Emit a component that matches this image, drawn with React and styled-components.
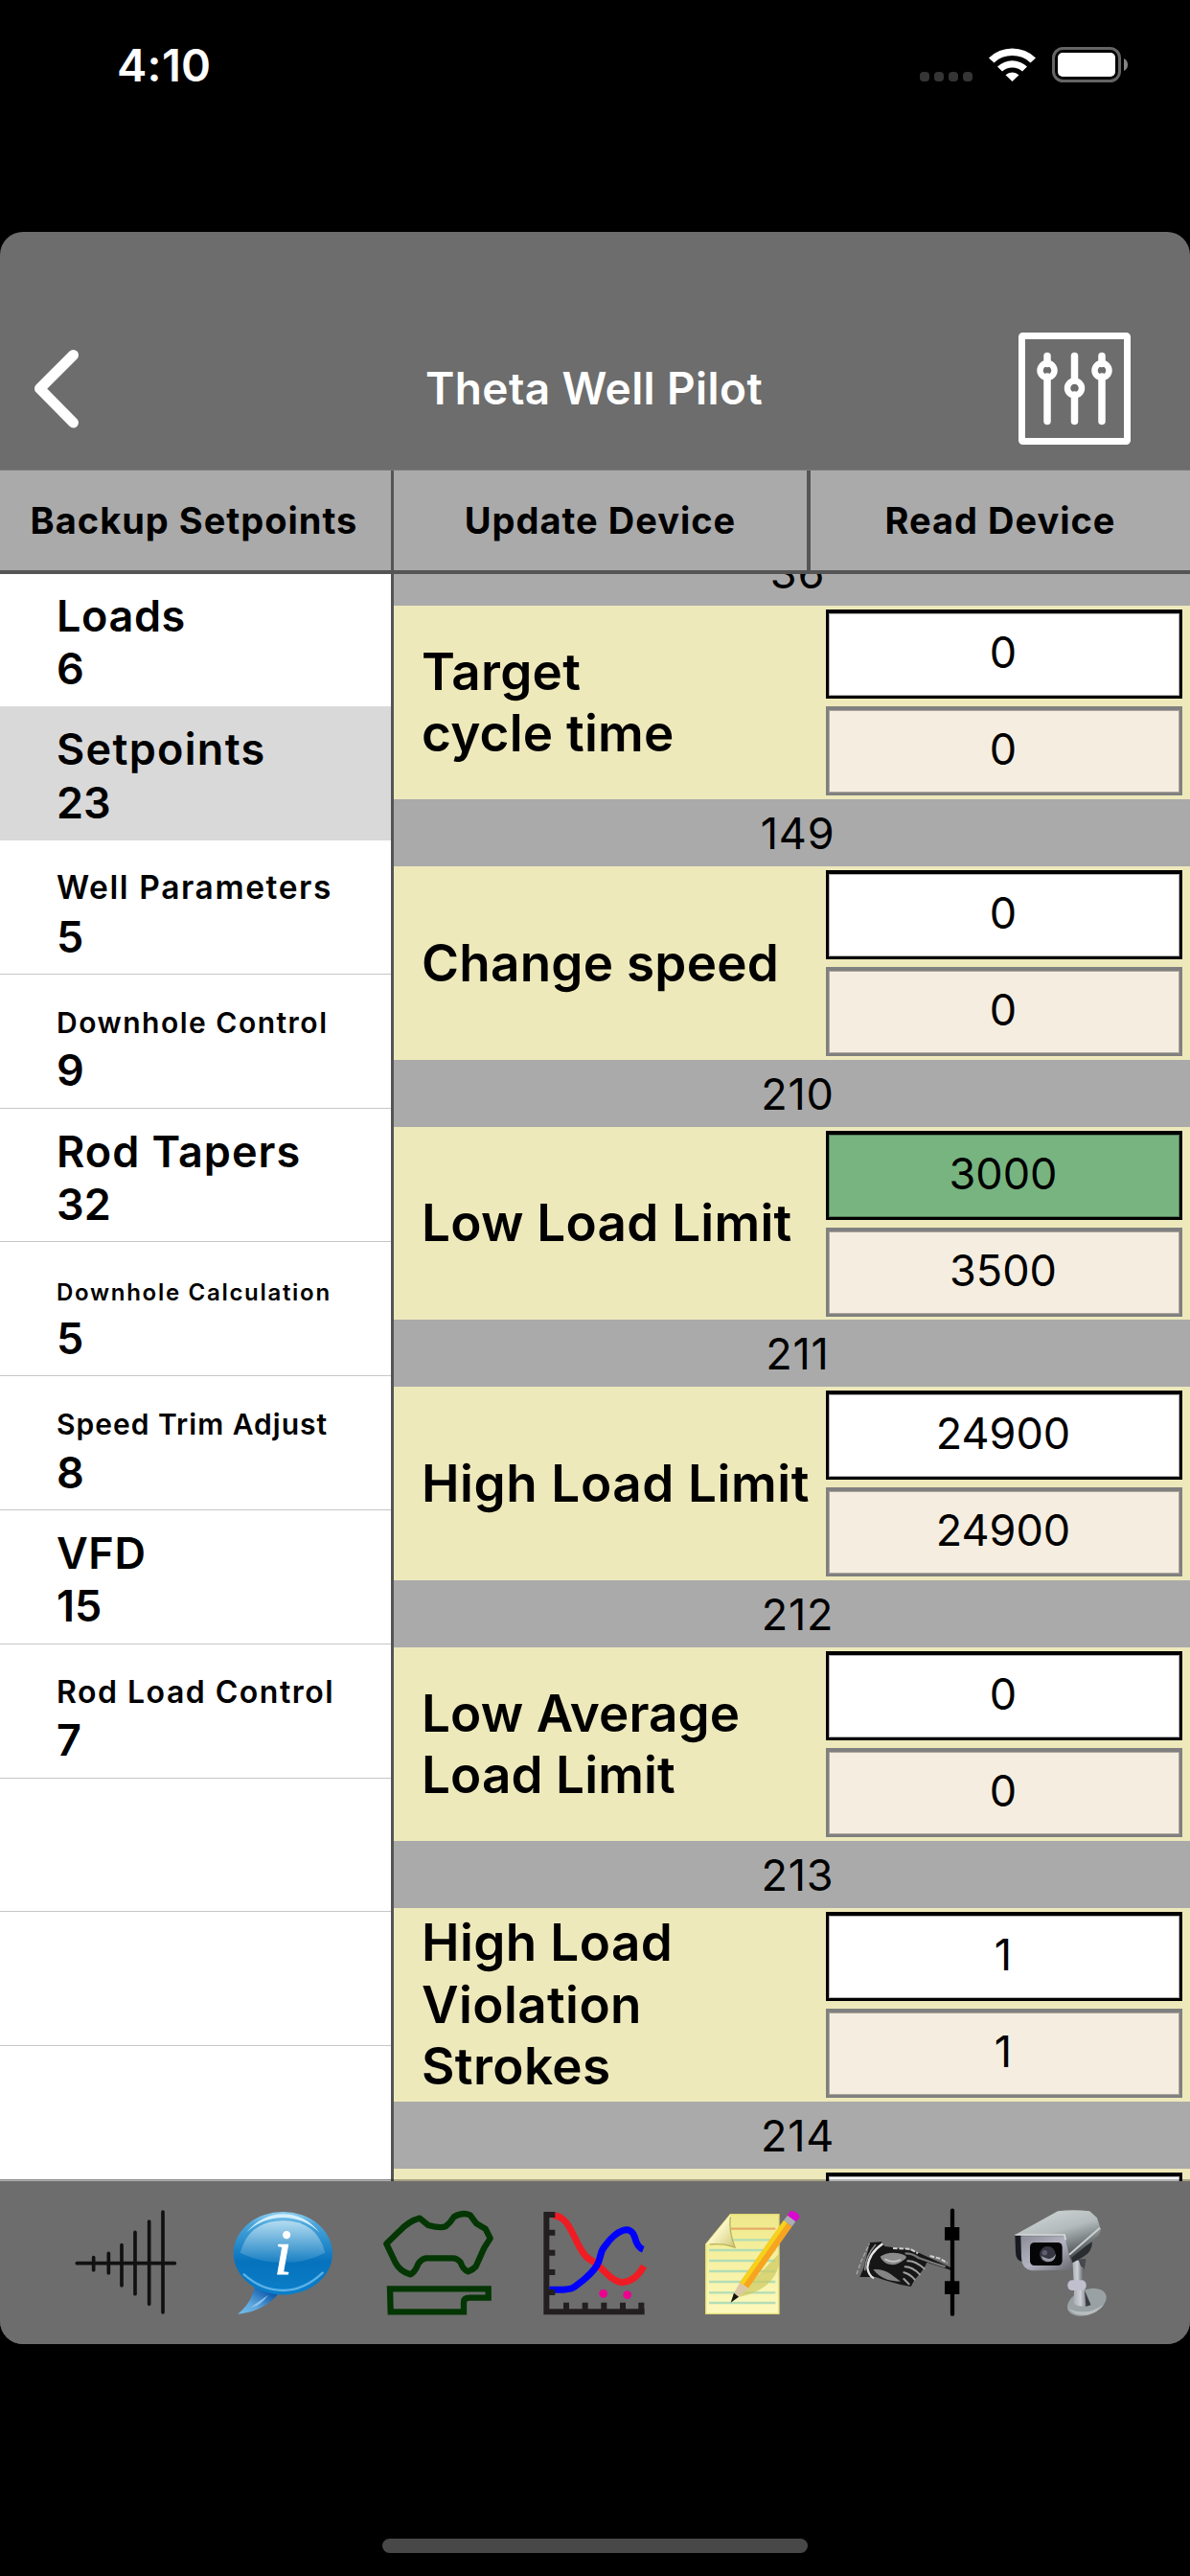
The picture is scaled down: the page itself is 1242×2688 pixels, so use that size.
import styled, { createGlobalStyle } from "styled-components"

const GlobalStyle = createGlobalStyle`
    body{
        margin: 0;
        background: #000;
        color: #000;
        font-family: Inter, "Liberation Sans", sans-serif;
    }
`

const Screen = styled.div`
    width: 1242px;
    height: 2688px;
    display: flex;
    flex-direction: column;
    background: #000;
    overflow: hidden;
`

const StatusBar = styled.div`
    height: 242px;
    flex-shrink: 0;
    display: flex;
    justify-content: space-between;
    align-items: flex-start;
    box-sizing: border-box;
    padding: 39px 65px 0 122px;
`

const Clock = styled.span`
    color: #fff;
    font-size: 47px;
    font-weight: 600;
    line-height: 58px;
    letter-spacing: 0.3px;
`

const StatusIcons = styled.svg`
    width: 217px;
    height: 38px;
    margin-top: 10px;
`

const Panel = styled.div`
    height: 2204px;
    flex-shrink: 0;
    display: flex;
    flex-direction: column;
    border-radius: 24px;
    overflow: hidden;
    background: #6d6d6d;
`

const Header = styled.div`
    height: 248px;
    flex-shrink: 0;
    box-sizing: border-box;
    padding: 78px 62px 0 28px;
    display: grid;
    grid-template-columns: 117px 1fr 117px;
    align-items: center;
`

const Title = styled.h1`
    margin: 0;
    padding-left: 32px;
    text-align: center;
    color: #fff;
    font-size: 46px;
    font-weight: 600;
    letter-spacing: 0.4px;
`

const HeaderIcon = styled.svg`
    width: ${({ w }) => w}px;
    height: 117px;
`

const Actions = styled.div`
    height: 109px;
    flex-shrink: 0;
    box-sizing: border-box;
    display: grid;
    grid-template-columns: 411px 435px 1fr;
    background: #aaa;
    border-top: 1px solid #7c7c7c;
    border-bottom: 4px solid #555;
`

const Action = styled.button`
    border: 0;
    padding: 0 ${({ $inset }) => $inset || 0}px 0 0;
    background: none;
    color: #000;
    font-family: inherit;
    font-size: 38px;
    font-weight: 700;
    letter-spacing: 1px;
    white-space: nowrap;
    border-right: ${({ $line }) => $line || 0}px solid #555;
`

const Body = styled.div`
    height: 1677px;
    flex-shrink: 0;
    display: flex;
    overflow: hidden;
`

const Groups = styled.div`
    width: 408px;
    flex-shrink: 0;
    box-sizing: content-box;
    border-right: 3px solid #555;
    background: #fff;
    overflow: hidden;
`

const GroupRow = styled.div`
    height: 139.77px;
    box-sizing: border-box;
    padding: 17px 0 0 59px;
    background: ${({ $active }) => ($active ? "#d9d9d9" : "#fff")};
    border-bottom: 1px solid ${({ $active, $plain }) => ($active ? "#d9d9d9" : $plain ? "#fff" : "#c6c6c8")};
    &:first-child{
        margin-top: -1.4px;
    }
`

const GroupLine = styled.div`
    font-size: 45px;
    font-weight: 600;
    line-height: 55.5px;
    white-space: nowrap;
`

const GroupName = styled.span`
    font-size: ${({ $size }) => $size}px;
    line-height: 0;
    letter-spacing: ${({ $space }) => $space}px;
`

const Setpoints = styled.div`
    flex: 1;
    overflow: hidden;
    background: #eee9bb;
`

const Scrolled = styled.div`
    margin-top: -37px;
`

const SectionTitle = styled.div`
    height: 70px;
    box-sizing: border-box;
    padding-left: 12px;
    background: #aaa;
    font-size: 45px;
    line-height: 71px;
    letter-spacing: 0.8px;
    text-align: center;
`

const SetpointRow = styled.div`
    height: 201.83px;
    box-sizing: border-box;
    padding: 4px 8px 0 29px;
    display: flex;
    justify-content: space-between;
`

const SetpointName = styled.div`
    height: 194px;
    display: flex;
    align-items: center;
    font-size: 53px;
    font-weight: 600;
    line-height: 64.5px;
    letter-spacing: ${({ $space }) => $space}px;
    white-space: pre;
`

const Values = styled.div`
    width: 372px;
    flex-shrink: 0;
    display: flex;
    flex-direction: column;
    gap: 8px;
`

const Value = styled.div`
    height: 93px;
    box-sizing: border-box;
    border-style: solid;
    border-width: 4px 3px 3px;
    border-color: ${({ $stored }) => ($stored ? "#808080" : "#000")};
    background: ${({ $stored, $changed }) => ($stored ? "#f5eee0" : $changed ? "#77b480" : "#fff")};
    box-shadow: inset 0 0 0 1px rgba(0, 0, 0, 0.3);
    font-size: 45px;
    line-height: 81px;
    text-align: center;
    padding-right: 2px;
`

const TabBar = styled.div`
    height: 170px;
    flex-shrink: 0;
    box-sizing: border-box;
    padding-left: 49px;
    display: flex;
    position: relative;
    background: #6d6d6d;
    box-shadow: 0 -2px 0 rgba(0, 0, 0, 0.3);
`

const TabIcon = styled.svg`
    width: 163px;
    height: 170px;
`

const HomeIndicator = styled.div`
    width: 444px;
    height: 15px;
    margin: 203px auto 0;
    border-radius: 8px;
    background: #484848;
`

const groups = [
    { name: "Loads", count: 6, size: 45, space: 0.6, plain: true },
    { name: "Setpoints", count: 23, size: 45, space: 1.3, active: true },
    { name: "Well Parameters", count: 5, size: 33.5, space: 1.6 },
    { name: "Downhole Control", count: 9, size: 30, space: 1.5 },
    { name: "Rod Tapers", count: 32, size: 45, space: 1 },
    { name: "Downhole Calculation", count: 5, size: 24, space: 1.7 },
    { name: "Speed Trim Adjust", count: 8, size: 30, space: 1 },
    { name: "VFD", count: 15, size: 45, space: 0.6 },
    { name: "Rod Load Control", count: 7, size: 32, space: 1.5 },
    {},
    {},
    {},
]

const setpoints = [
    { id: 36, name: "Target\ncycle time", value: 0, stored: 0 },
    { id: 149, name: "Change speed", value: 0, stored: 0 },
    { id: 210, name: "Low Load Limit", value: 3000, stored: 3500 },
    { id: 211, name: "High Load Limit", value: 24900, stored: 24900, space: 0.6 },
    { id: 212, name: "Low Average\nLoad Limit", value: 0, stored: 0, space: 0.1 },
    { id: 213, name: "High Load\nViolation\nStrokes", value: 1, stored: 1, space: 0.4 },
    { id: 214, name: "", value: "", stored: "" },
]

const SignalBatteryIcon = () => (
    <StatusIcons viewBox="0 0 217 38">
        <g fill="#353535">
            {[0, 15, 30, 45].map((x) => (
                <rect key={x} x={x} y="26" width="10" height="10" rx="4" />
            ))}
        </g>
        <g transform="translate(72 0)" fill="#fff">
            <path d="M0 11.500A35 35 0 0 1 49 11.500L43.500 16.500A27.500 27.500 0 0 0 5.500 16.500z" />
            <path d="M9 20.500A22.500 22.500 0 0 1 40 20.500L35 25.500A15.500 15.500 0 0 0 14 25.500z" />
            <path d="M17.500 29.200A10.500 10.500 0 0 1 31.500 29.200L24.500 36z" />
        </g>
        <rect x="139.500" y="1.500" width="69" height="34" rx="10" fill="none" stroke="#656565" strokeWidth="3" />
        <rect x="144" y="6" width="60" height="25" rx="5" fill="#fff" />
        <path d="M213 12q4 2 4 6.500t-4 6.500z" fill="#858585" />
    </StatusIcons>
)

const BackIcon = () => (
    <HeaderIcon w={60} viewBox="0 0 60 117">
        <path d="M48.500 23.500L13.500 58.500l35 35.500" fill="none" stroke="#fff" strokeWidth="11" strokeLinecap="round" strokeLinejoin="round" />
    </HeaderIcon>
)

const SlidersIcon = () => (
    <HeaderIcon w={117} viewBox="0 0 117 117">
        <g fill="none" stroke="#fff">
            <rect x="3.500" y="3.500" width="110" height="110" rx="1" strokeWidth="7" />
            <g strokeWidth="7.500" strokeLinecap="round">
                <path d="M30 24.500v8M30 46v46.500M58.500 24.500v25M58.500 65v27.500M87 24.500v8M87 46v46.500" />
            </g>
            <g strokeWidth="6.500">
                <circle cx="30" cy="39.500" r="7.500" />
                <circle cx="58.500" cy="58" r="7.500" />
                <circle cx="87" cy="39.500" r="7.500" />
            </g>
        </g>
    </HeaderIcon>
)

const SignalIcon = () => (
    <TabIcon viewBox="-33 -12 489 510">
        <path
            d="M61 245H367M113 227v39M160 214v62M201 188v127M243 148v193M287 114v259M330 84v315"
            fill="none" stroke="#111" strokeWidth="11" strokeLinecap="round"
        />
    </TabIcon>
)

const InfoIcon = () => (
    <TabIcon viewBox="456 -12 489 510">
        <defs>
            <linearGradient id="bubble" x1="0" y1="0" x2="0" y2="1">
                <stop offset="0" stopColor="#8fd0f2" />
                <stop offset="0.15" stopColor="#4aa5da" />
                <stop offset="0.6" stopColor="#0672bd" />
                <stop offset="1" stopColor="#0c7fca" />
            </linearGradient>
            <linearGradient id="gloss" x1="0" y1="0" x2="0" y2="1">
                <stop offset="0" stopColor="#b3dcf1" />
                <stop offset="1" stopColor="#1a80c3" />
            </linearGradient>
            <linearGradient id="tail" x1="0" y1="1" x2="1" y2="0">
                <stop offset="0" stopColor="#6fc0ee" />
                <stop offset="0.35" stopColor="#5fa6de" />
                <stop offset="0.8" stopColor="#0c5bac" />
            </linearGradient>
        </defs>
        <path d="M618 318Q606 372 564 404Q645 396 690 342z" fill="url(#tail)" />
        <path d="M660 345Q626 366 606 384Q636 378 660 345z" fill="#9ccdf0" opacity="0.8" />
        <ellipse cx="706" cy="214" rx="155" ry="130" fill="url(#bubble)" />
        <path d="M592 148Q640 92 706 91T820 148Q770 102 706 102T592 148z" fill="#d3effc" />
        <path d="M572 212Q600 112 706 112T838 212Q780 243 706 243T572 212z" fill="url(#gloss)" />
        <path d="M584 280Q640 330 706 330T830 275" fill="none" stroke="#5bb2e8" strokeWidth="7" strokeLinecap="round" />
        <text x="678" y="280" fill="#fff" stroke="#fff" strokeWidth="3" fontFamily="'Liberation Serif', serif" fontStyle="italic" fontSize="202">i</text>
    </TabIcon>
)

const DynoCardIcon = () => (
    <TabIcon viewBox="-15 -12 489 510">
        <g fill="none" stroke="#033603" strokeWidth="19" strokeLinejoin="round">
            <path d="M70 184L110 145Q140 113 174 104L201 126Q238 136 255 130Q270 118 281 100Q308 84 332 94L352 121L380 137L395 167L376 197L350 255Q340 266 326 271Q310 265 302 242Q292 229 277 229H194Q180 231 170 246Q158 276 144 280Q112 270 98 243z" />
            <path d="M81 325H389V353H330Q312 353 312 367V397H83z" strokeLinejoin="miter" />
        </g>
    </TabIcon>
)

const ChartIcon = () => (
    <TabIcon viewBox="474 -12 489 510">
        <path d="M590 96C650 92 660 200 702 230C750 256 770 302 808 305Q850 302 876 254" fill="none" stroke="#ef1c24" strokeWidth="21" />
        <path d="M580 328H610C665 328 660 315 686 298C760 235 725 225 755 190C790 142 835 120 848 165Q855 195 874 202" fill="none" stroke="#0000fe" strokeWidth="21" />
        <circle cx="749" cy="340" r="13" fill="#ec0090" />
        <circle cx="824" cy="344" r="13" fill="#ec0090" />
        <g stroke="#231f20" fill="none" strokeWidth="18">
            <path d="M571 84V397H878" />
            <path d="M578 93h20M578 149h20M578 212h20M578 273h20M578 336h20M633 368v22M692 368v22M751 368v22M810 368v22M868 368v22" />
        </g>
    </TabIcon>
)

const NotesIcon = () => (
    <TabIcon viewBox="-27 -12 489 510">
        <defs>
            <linearGradient id="paper" x1="0" y1="0" x2="0" y2="1">
                <stop offset="0" stopColor="#efe98a" />
                <stop offset="1" stopColor="#fdf9bd" />
            </linearGradient>
            <linearGradient id="fold" x1="0" y1="0" x2="1" y2="1">
                <stop offset="0.4" stopColor="#fffbd0" />
                <stop offset="1" stopColor="#cfc97a" />
            </linearGradient>
        </defs>
        <path d="M157 92H309V403H80V186z" fill="url(#paper)" stroke="#e0dc72" strokeWidth="4" />
        <path d="M158 137H298" stroke="#e5ad69" strokeWidth="7" />
        <path d="M160 172H298M90 204H298M90 237H298M90 270H298M90 303H298M90 337H298M90 369H298" stroke="#b2ddb6" strokeWidth="7" />
        <path d="M309 215L202 325L180 352Q290 330 309 250z" fill="#cdc95f" opacity="0.7" />
        <path d="M157 92Q150 145 171 195Q128 178 80 186z" fill="url(#fold)" />
        <path d="M157 100Q151 145 171 195Q135 182 92 186" fill="none" stroke="#bab258" strokeWidth="4" />
        <path d="M186 306L324 110L350 130L213 323z" fill="#f7a520" />
        <path d="M186 306L324 110L335 118L198 313z" fill="#f6d21c" />
        <path d="M324 110L336 95L362 113L350 130z" fill="#a9adb5" />
        <path d="M336 95L344 82Q352 78 364 87T373 102L362 115z" fill="#dc08cf" />
        <path d="M186 306L213 323L180 352L166 342z" fill="#ddc8a6" />
        <path d="M168 338L183 350L158 368z" fill="#16130e" />
    </TabIcon>
)

const PointerIcon = () => (
    <TabIcon viewBox="462 -12 489 510">
        <path d="M594 180L630 178L640 192L702 200L750 214L846 258V266L772 242L766 256L750 278L734 296L722 318L690 312L640 298L612 288L562 288L574 260z" fill="#161616" />
        <path d="M552 280L566 240L592 184" fill="none" stroke="#a8a8a8" strokeWidth="4" strokeDasharray="14 6" />
        <path d="M634 184Q590 214 586 258Q588 282 606 292" fill="none" stroke="#e6e6e6" strokeWidth="7" />
        <path d="M612 186Q580 222 578 268" fill="none" stroke="#8a8a8a" strokeWidth="5" />
        <path d="M626 224Q652 206 690 215Q716 222 704 232Q682 250 664 250Q634 246 626 224z" fill="#8a8a8a" />
        <path d="M640 232Q664 246 690 234" fill="none" stroke="#c4c4c4" strokeWidth="5" />
        <path d="M604 264Q636 262 658 278L690 302Q632 302 604 264z" fill="#848484" />
        <path d="M666 198L720 200L744 214M782 222L812 230L836 244" fill="none" stroke="#d0d0d0" strokeWidth="6" strokeDasharray="14 5" />
        <path d="M704 214Q728 214 746 228Q790 244 830 256" fill="none" stroke="#777" strokeWidth="7" />
        <path d="M712 238Q734 236 764 262M704 256Q726 256 750 280M700 274Q718 278 734 296M700 294L716 310" fill="none" stroke="#a0a0a0" strokeWidth="6" strokeLinecap="round" />
        <path d="M852 80V404" stroke="#000" strokeWidth="13" strokeLinecap="round" />
        <path d="M828 132h46v41h-46zM828 301h46v41h-46z" fill="#000" />
    </TabIcon>
)

const CameraIcon = () => (
    <TabIcon viewBox="-9 -12 489 510">
        <defs>
            <linearGradient id="shell" x1="0.2" y1="0" x2="0.700" y2="1">
                <stop offset="0" stopColor="#d0d6d6" />
                <stop offset="0.45" stopColor="#b4bbbc" />
                <stop offset="1" stopColor="#3f4548" />
            </linearGradient>
            <linearGradient id="face" x1="0" y1="0" x2="1" y2="1">
                <stop offset="0" stopColor="#8b8c96" />
                <stop offset="0.5" stopColor="#b4b3c2" />
                <stop offset="1" stopColor="#66666e" />
            </linearGradient>
            <linearGradient id="stand" x1="0" y1="0" x2="1" y2="0">
                <stop offset="0" stopColor="#a9adb4" />
                <stop offset="0.4" stopColor="#cdd0d6" />
                <stop offset="1" stopColor="#4b4e52" />
            </linearGradient>
        </defs>
        <ellipse cx="313" cy="367" rx="64" ry="39" transform="rotate(-22 313 367)" fill="#9aa1a4" />
        <path d="M254 384Q270 411 313 407Q350 398 366 374Q330 398 300 397Q270 398 254 384z" fill="#b8bdc0" />
        <path d="M273 326H305L325 374Q300 388 272 372z" fill="url(#stand)" />
        <path d="M306 330L325 376L310 380z" fill="#393c40" />
        <path d="M268 236H306V250L298 305H272z" fill="url(#stand)" />
        <path d="M286 232L310 232L306 262L294 254z" fill="#46484d" />
        <rect x="253" y="298" width="58" height="32" rx="14" fill="#c0bfce" />
        <path d="M262 220L330 178Q330 210 300 226L268 244z" fill="#292d30" />
        <path d="M88 156L222 82Q270 76 322 82L345 103L357 140L350 158L260 232L246 166L240 158z" fill="url(#shell)" />
        <path d="M258 218L354 134" stroke="#cbd0cf" strokeWidth="6" />
        <path d="M88 154L110 158V240Q90 235 90 210z" fill="#171a20" />
        <path d="M106 160H244Q254 205 269 266L140 268Q108 262 108 226z" fill="url(#face)" />
        <path d="M88 156H243L247 172" fill="none" stroke="#d8dcdc" strokeWidth="5" />
        <rect x="135" y="180" width="101" height="72" rx="14" fill="#050507" />
        <circle cx="190" cy="217" r="25" fill="#343641" />
        <path d="M170 222Q174 240 194 240T216 216Q204 234 190 230T170 222z" fill="#999aa6" />
        <circle cx="181" cy="212" r="8" fill="#5d6072" />
    </TabIcon>
)

const App = () => {
    return (
        <Screen>
            <GlobalStyle />
            <StatusBar>
                <Clock>4:10</Clock>
                <SignalBatteryIcon />
            </StatusBar>
            <Panel>
                <Header>
                    <BackIcon />
                    <Title>Theta Well Pilot</Title>
                    <SlidersIcon />
                </Header>
                <Actions>
                    <Action $line={3} $inset={3}>Backup Setpoints</Action>
                    <Action $line={4}>Update Device</Action>
                    <Action>Read Device</Action>
                </Actions>
                <Body>
                    <Groups>
                        {groups.map((group, index) => (
                            <GroupRow key={index} $active={group.active} $plain={group.plain}>
                                {group.name && (
                                    <>
                                        <GroupLine>
                                            <GroupName $size={group.size} $space={group.space}>{group.name}</GroupName>
                                        </GroupLine>
                                        <GroupLine>{group.count}</GroupLine>
                                    </>
                                )}
                            </GroupRow>
                        ))}
                    </Groups>
                    <Setpoints>
                        <Scrolled>
                            {setpoints.map((item) => (
                                <div key={item.id}>
                                    <SectionTitle>{item.id}</SectionTitle>
                                    <SetpointRow>
                                        <SetpointName $space={item.space || 0.25}>{item.name}</SetpointName>
                                        <Values>
                                            <Value $changed={item.value !== item.stored}>{item.value}</Value>
                                            <Value $stored>{item.stored}</Value>
                                        </Values>
                                    </SetpointRow>
                                </div>
                            ))}
                        </Scrolled>
                    </Setpoints>
                </Body>
                <TabBar>
                    <SignalIcon />
                    <InfoIcon />
                    <DynoCardIcon />
                    <ChartIcon />
                    <NotesIcon />
                    <PointerIcon />
                    <CameraIcon />
                </TabBar>
            </Panel>
            <HomeIndicator />
        </Screen>
    )
}

export default App
